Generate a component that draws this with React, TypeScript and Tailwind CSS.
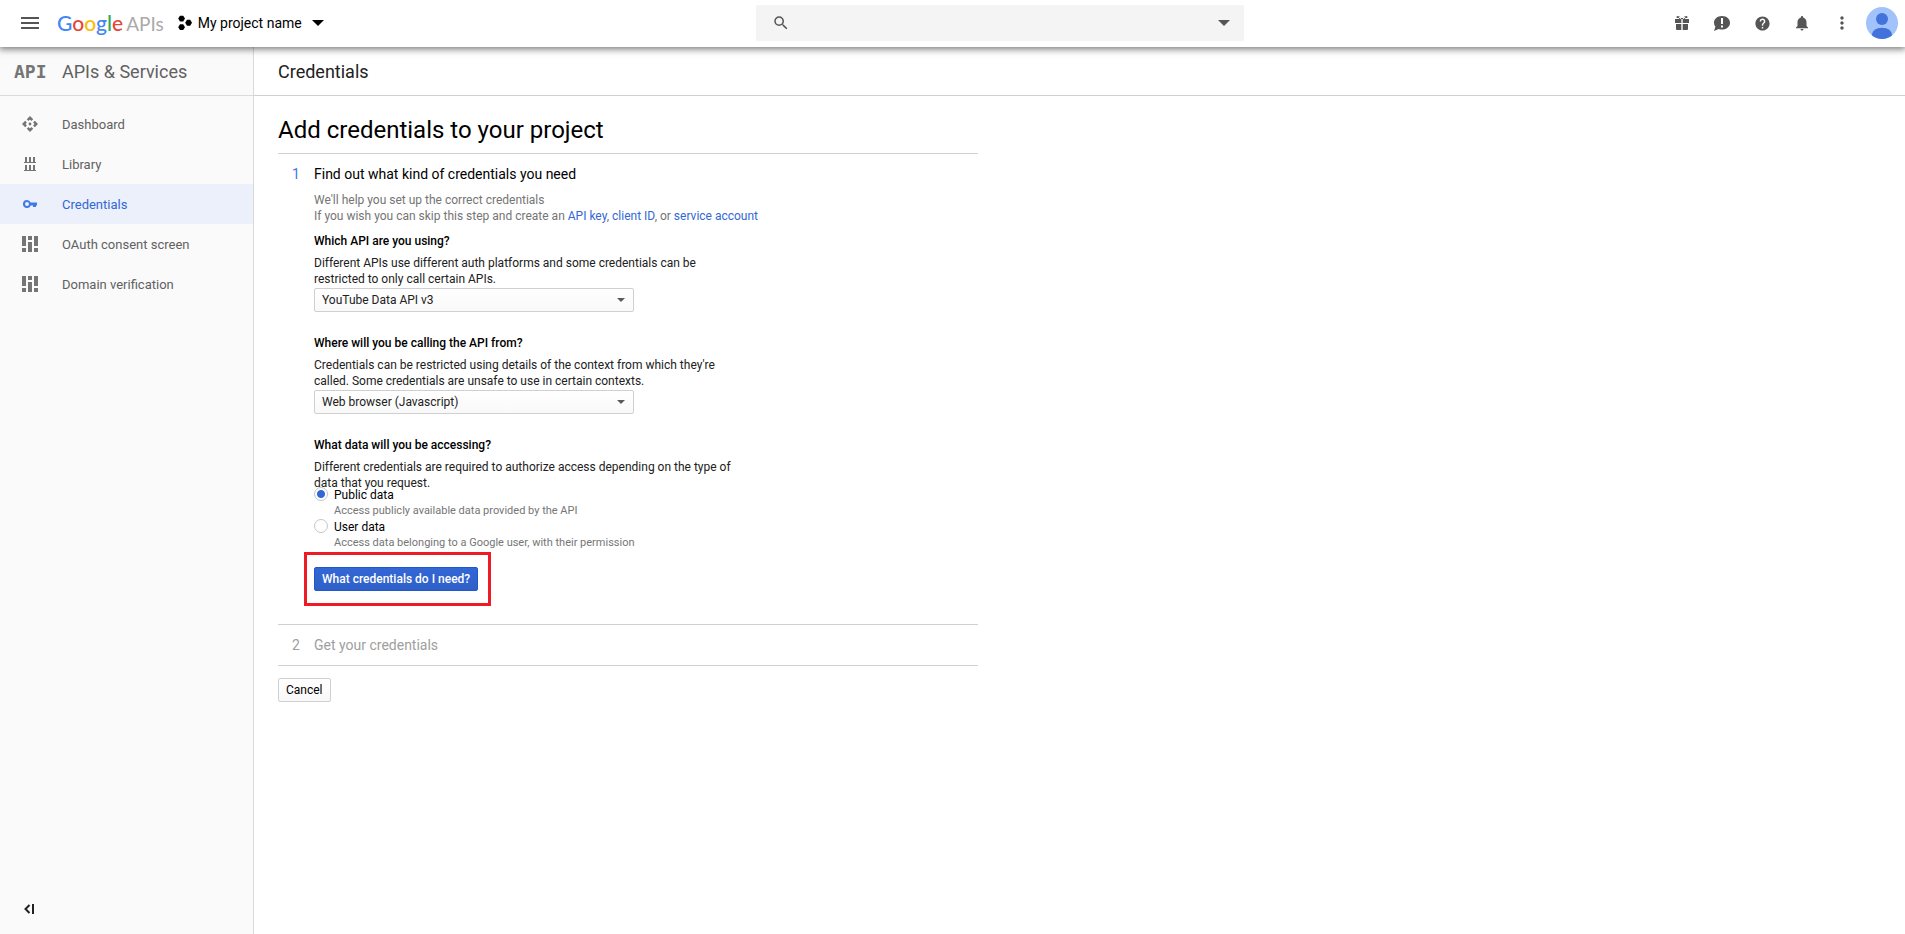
import type { ReactNode } from "react";
import { MdHelp, MdMenu, MdMoreVert, MdNotifications, MdSearch } from "react-icons/md";

function GiftIcon() {
  return (
    <svg width="18" height="18" viewBox="0 0 18 18" fill="currentColor" aria-hidden="true">
      <path d="M2 5h6V3.6L6.6 5 5.4 4 7 2.400 5 2.200a1 1 0 0 0-1 1.800H14a1 1 0 0 0-1-1.800l-2 .2L12.600 4l-1.200 1L10 3.600V5h6v4h-6.300V5H8.300v4H2z" />
      <path d="M3 10h5.300v6H4a1 1 0 0 1-1-1zM9.700 10H15v5a1 1 0 0 1-1 1H9.700z" />
    </svg>
  );
}

function FeedbackIcon() {
  return (
    <svg width="18" height="18" viewBox="0 0 18 18" fill="currentColor" aria-hidden="true">
      <path
        fillRule="evenodd"
        d="M9 2c4.600 0 8 2.900 8 6.800s-3.400 6.800-8 6.800c-1.200 0-2.300-.2-3.300-.6L1 17l1.400-4.200A6.200 6.200 0 0 1 1 8.800C1 4.900 4.400 2 9 2zM8 4v6h2V4zm0 7.500v2h2v-2z"
      />
    </svg>
  );
}

function Avatar() {
  return (
    <svg width="32" height="32" viewBox="0 0 32 32" aria-hidden="true">
      <circle cx="16" cy="16" r="16" fill="#a1c2fa" />
      <circle cx="16" cy="12" r="6" fill="#4272db" />
      <path d="M6 28.500c0-5 4-7.800 10-7.800s10 2.800 10 7.800A16 16 0 0 1 16 32a16 16 0 0 1-10-3.500z" fill="#4272db" />
    </svg>
  );
}

function ProjectIcon() {
  return (
    <svg width="14" height="16" viewBox="0 0 14 16" aria-hidden="true">
      <path d="M2 .8h3.200L7 3.600 5.200 6.600H2L.2 3.600zM2 9.200h3.200L7 12.200 5.200 15H2L.2 12.200zM9 4.800h3.200L14 7.800l-1.800 3H9L7.200 7.800z" />
    </svg>
  );
}

function DashboardIcon() {
  return (
    <svg width="16" height="16" viewBox="0 0 16 16" fill="currentColor" aria-hidden="true">
      <path d="M8 0l3.200 3.200-1.700 1.700L8 3.400 6.500 4.900 4.800 3.200zM8 16l-3.200-3.200 1.700-1.700L8 12.600l1.500-1.500 1.700 1.700zM0 8l3.200-3.200 1.700 1.700L3.400 8l1.500 1.500-1.700 1.700zM16 8l-3.200 3.200-1.700-1.700L12.600 8l-1.500-1.500 1.700-1.700z" />
      <path d="M8 1l2.500 2.500h-5zM8 15l-2.500-2.500h5zM1 8l2.500-2.500v5zM15 8l-2.500 2.500v-5z" />
      <circle cx="8" cy="8" r="1.400" />
    </svg>
  );
}

function LibraryIcon() {
  return (
    <svg width="16" height="16" viewBox="0 0 16 16" fill="currentColor" aria-hidden="true">
      <path d="M3 1h2v5h2V1h2v5h2V1h2v5h1v1H2V6h1zM3 9h2v5h2V9h2v5h2V9h2v5h1v1H2v-1h1z" />
    </svg>
  );
}

function KeyIcon() {
  return (
    <svg width="16" height="16" viewBox="0 0 16 16" fill="currentColor" aria-hidden="true">
      <path
        fillRule="evenodd"
        d="M5 4a4 4 0 0 1 3.700 2.600H15v2.800h-1V11h-3V9.400H8.700A4 4 0 1 1 5 4zm0 2a2 2 0 1 0 0 4 2 2 0 0 0 0-4z"
      />
    </svg>
  );
}

function BarsIcon() {
  return (
    <svg width="16" height="16" viewBox="0 0 16 16" fill="currentColor" aria-hidden="true">
      <path d="M0 0h4v10H0zM0 12h4v4H0zM6 0h4v4H6zM6 6h4v10H6zM12 0h4v10h-4zM12 12h4v4h-4z" />
    </svg>
  );
}

function Caret({ className, width, height }: { className?: string; width: number; height: number }) {
  return (
    <svg className={className} width={width} height={height} viewBox="0 0 12 6" preserveAspectRatio="none" fill="currentColor" aria-hidden="true">
      <path d="M0 0h12L6 6z" />
    </svg>
  );
}

function NavItem({ icon, label, active }: { icon: ReactNode; label: string; active?: boolean }) {
  return (
    <a
      href="#"
      aria-current={active ? "page" : undefined}
      className={
        active
          ? "flex h-10 items-center gap-6 bg-[#ebf0fa] pl-[22px] text-[#3367d6]"
          : "flex h-10 items-center gap-6 pl-[22px] text-[#616161]"
      }
    >
      <span className={active ? "text-[#4279e8]" : "text-[#757575]"}>{icon}</span>
      <span className="pt-0.5">{label}</span>
    </a>
  );
}

function SelectField({ id, label, hint, value }: { id: string; label: string; hint: string; value: string }) {
  return (
    <div className="mb-[23px]">
      <label htmlFor={id} className="mb-1.5 block font-medium text-black">
        {label}
      </label>
      <p className="max-w-[430px]">{hint}</p>
      <div className="relative mt-px w-80 max-w-full">
        <select
          id={id}
          className="block h-6 w-full appearance-none rounded-xs border border-[#d0d0d0] bg-linear-to-b from-white to-[#f9f9f9] pr-8 pl-[7px] text-xs text-[#212121]"
        >
          <option>{value}</option>
        </select>
        <Caret width={8} height={4} className="pointer-events-none absolute top-[10px] right-[9px] text-[#5a5a5a]" />
      </div>
    </div>
  );
}

function RadioOption({ id, label, hint, checked }: { id: string; label: string; hint: string; checked?: boolean }) {
  return (
    <div className="flex h-8 gap-1.5">
      <input
        type="radio"
        id={id}
        name="data-access"
        defaultChecked={checked}
        className="h-3.5 w-3.5 shrink-0 appearance-none rounded-full border border-[#c6c6c6] bg-white checked:bg-[radial-gradient(circle,#3367d6_0_3.5px,#fff_4.5px)]"
      />
      <div>
        <label htmlFor={id} className="block text-black">
          {label}
        </label>
        <p className="text-[11px] leading-4 text-[#757575]">{hint}</p>
      </div>
    </div>
  );
}

export default function App() {
  return (
    <div className="flex min-h-screen flex-col bg-white font-[Roboto,sans-serif] text-xs leading-4 text-[#212121]">
      <header className="z-10 flex h-[47px] items-center bg-white pb-px shadow-[0_1px_7px_1px_rgba(0,0,0,0.55)]">
        <div className="flex flex-[8] items-center">
          <button aria-label="Main menu" className="ml-[18px] text-[#555]">
            <MdMenu size={24} />
          </button>
          <a href="#" className="ml-[15px] flex items-baseline gap-[3px] font-[Lato,sans-serif] leading-6">
            <span className="text-[21px] font-medium">
              <span className="text-[#4285f4]">G</span>
              <span className="text-[#ea4335]">o</span>
              <span className="text-[#fbbc05]">o</span>
              <span className="text-[#4285f4]">g</span>
              <span className="text-[#34a853]">l</span>
              <span className="text-[#ea4335]">e</span>
            </span>
            <span className="text-[19px] text-[#aaa]">APIs</span>
          </a>
          <button className="ml-3.5 flex items-center text-sm text-black">
            <ProjectIcon />
            <span className="ml-1.5">My project name</span>
            <Caret width={12} height={6} className="ml-2.5" />
          </button>
        </div>
        <form className="flex h-9 w-[488px] items-center rounded-xs bg-[#f4f4f4] text-[#555]">
          <MdSearch size={18} className="ml-4 shrink-0" />
          <input type="search" aria-label="Search" className="h-full min-w-0 flex-1 bg-transparent px-3 text-sm outline-none" />
          <button type="button" aria-label="Search options" className="flex h-9 w-10 items-center justify-center">
            <Caret width={12} height={6} />
          </button>
        </form>
        <div className="flex flex-[7] text-[#555]">
          <div className="mr-[3px] ml-auto flex items-center">
            <button aria-label="Gifts" className="flex w-10 justify-center">
              <GiftIcon />
            </button>
            <button aria-label="Send feedback" className="flex w-10 justify-center">
              <FeedbackIcon />
            </button>
            <button aria-label="Help" className="flex w-10 justify-center">
              <MdHelp size={17} />
            </button>
            <button aria-label="Notifications" className="flex w-10 justify-center">
              <MdNotifications size={18} />
            </button>
            <button aria-label="More" className="flex w-10 justify-center">
              <MdMoreVert size={20} />
            </button>
            <button aria-label="Account" className="flex w-10 justify-center">
              <Avatar />
            </button>
          </div>
        </div>
      </header>

      <div className="flex flex-1">
        <aside className="flex w-[254px] shrink-0 flex-col border-r border-[#dadada] bg-[#fafafa]">
          <div className="flex h-[49px] items-center border-b border-[#dadada] pt-0.5 pl-3.5 text-lg text-[#616161]">
            <span aria-hidden="true" className="w-12 font-['DejaVu_Sans_Mono',monospace] text-lg font-bold text-[#757575]">
              API
            </span>
            APIs &amp; Services
          </div>
          <nav className="flex-1 pt-2 text-[13px]">
            <NavItem icon={<DashboardIcon />} label="Dashboard" />
            <NavItem icon={<LibraryIcon />} label="Library" />
            <NavItem icon={<KeyIcon />} label="Credentials" active />
            <NavItem icon={<BarsIcon />} label="OAuth consent screen" />
            <NavItem icon={<BarsIcon />} label="Domain verification" />
          </nav>
          <button aria-label="Collapse menu" className="mb-5 ml-6 w-fit text-[#222]">
            <svg width="11" height="10" viewBox="0 0 11 10" fill="none" stroke="currentColor" strokeWidth="2" aria-hidden="true">
              <path d="M5.500 1L1.500 5l4 4M9 0v10" />
            </svg>
          </button>
        </aside>

        <main className="min-w-0 flex-1">
          <h1 className="flex h-[49px] items-center border-b border-[#d0d0d0] pt-0.5 pl-6 text-lg">Credentials</h1>
          <div className="max-w-[724px] pl-6">
            <h2 className="border-b border-[#d0d0d0] pt-[18px] pb-[7px] text-2xl leading-8 text-black">Add credentials to your project</h2>

            <section className="flex border-b border-[#d0d0d0] pt-2.5 pb-[18px]">
              <span className="w-9 shrink-0 pl-3.5 text-sm leading-5 text-[#3b78e7]">1</span>
              <div>
                <h3 className="mb-2 text-sm leading-5 text-black">Find out what kind of credentials you need</h3>
                <p className="text-[#757575]">
                  We'll help you set up the correct credentials
                  <br />
                  If you wish you can skip this step and create an{" "}
                  <a href="#" className="text-[#3367d6]">API key</a>,{" "}
                  <a href="#" className="text-[#3367d6]">client ID</a>, or{" "}
                  <a href="#" className="text-[#3367d6]">service account</a>
                </p>
                <form className="mt-[9px]">
                  <SelectField
                    id="api"
                    label="Which API are you using?"
                    hint="Different APIs use different auth platforms and some credentials can be restricted to only call certain APIs."
                    value="YouTube Data API v3"
                  />
                  <SelectField
                    id="caller"
                    label="Where will you be calling the API from?"
                    hint="Credentials can be restricted using details of the context from which they're called. Some credentials are unsafe to use in certain contexts."
                    value="Web browser (Javascript)"
                  />
                  <fieldset>
                    <legend className="mb-1.5 font-medium text-black">What data will you be accessing?</legend>
                    <p className="max-w-[430px]">
                      Different credentials are required to authorize access depending on the type of data that you request.
                    </p>
                    <div className="-mt-1">
                      <RadioOption
                        id="public-data"
                        label="Public data"
                        hint="Access publicly available data provided by the API"
                        checked
                      />
                      <RadioOption
                        id="user-data"
                        label="User data"
                        hint="Access data belonging to a Google user, with their permission"
                      />
                    </div>
                  </fieldset>
                  <div className="mt-px -ml-2.5 w-fit border-3 border-[#ed1c24] py-3 pr-2.5 pl-[7px]">
                    <button
                      type="button"
                      className="block h-6 rounded-xs border border-[#1f58c7] bg-linear-to-b from-[#3367d6] to-[#2f60c8] px-[7px] font-medium text-white"
                    >
                      What credentials do I need?
                    </button>
                  </div>
                </form>
              </div>
            </section>

            <section className="flex border-b border-[#d0d0d0] py-2.5 text-sm leading-5 text-[#9e9e9e]">
              <span className="w-9 shrink-0 pl-3.5">2</span>
              <h3>Get your credentials</h3>
            </section>

            <button className="mt-3 h-6 rounded-xs border border-[#d0d0d0] bg-linear-to-b from-white to-[#f8f8f8] px-[7px] text-black">
              Cancel
            </button>
          </div>
        </main>
      </div>
    </div>
  );
}
